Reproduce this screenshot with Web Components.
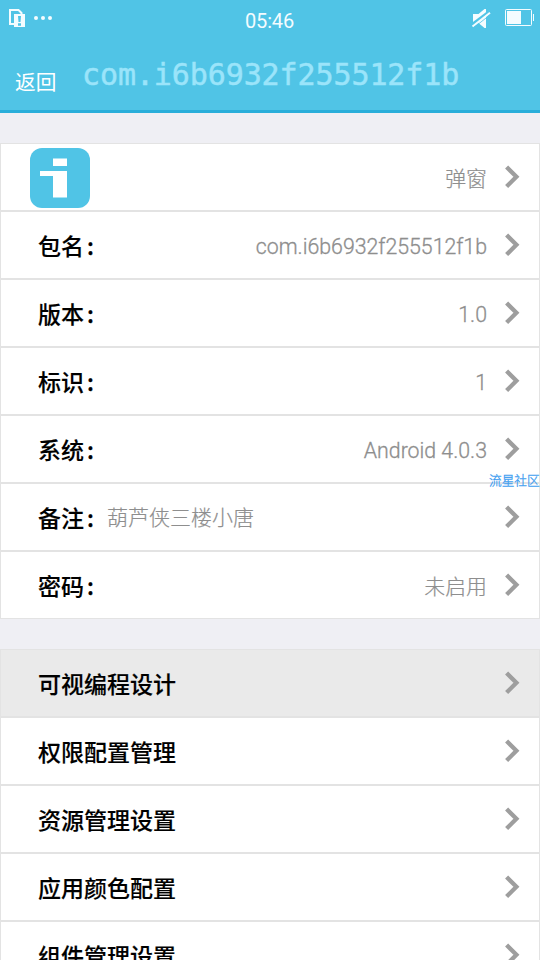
<!DOCTYPE html>
<html lang="zh-CN">
<head>
<meta charset="utf-8">
<title>com.i6b6932f255512f1b</title>
<style>
html,body{margin:0;height:960px;overflow:hidden;background:#efeff4;font-family:"Liberation Sans","Noto Sans CJK SC",sans-serif}
</style>
</head>
<body>
<app-screen></app-screen>
<script>
const define=(name,html,setup)=>customElements.define(name,class extends HTMLElement{
  connectedCallback(){
    if(this.shadowRoot)return;
    const t=document.createElement('template');t.innerHTML=html;
    this.attachShadow({mode:'open'}).append(t.content.cloneNode(true));
    if(setup)setup(this);
  }
});

define('status-bar',`<style>
:host{display:grid;grid-template-columns:1fr auto 1fr;height:40px;color:#f4fcff;align-items:start}
svg{display:block}
.time{font:20px/22px Roboto,sans-serif;padding-top:10px;margin-left:-1px;letter-spacing:-.15px}
.right{justify-self:end}
</style>
<svg width="60" height="36" viewBox="0 0 60 36"><path d="M14 24H10V10h8.500l3 3V14" fill="none" stroke="#f4fcff" stroke-width="2"/><path d="M14 14h11v13H14z" fill="#f4fcff"/><path d="M18 16h3l-.5 6h-2zM18 23.300h3v2.400h-3z" fill="#50c4e6"/><g fill="#f4fcff"><circle cx="36" cy="18" r="2"/><circle cx="43" cy="18" r="2"/><circle cx="50" cy="18" r="2"/></g></svg>
<span class="time">05:46</span>
<svg class="right" width="80" height="36" viewBox="460 0 80 36"><path d="M473 14h5.500l6-5h1.500v19h-1.500l-6-5H473z" fill="#f4fcff"/><path d="M471.500 25L489.500 11.500" stroke="#50c4e6" stroke-width="3"/><path d="M472.500 26.500L490 12.700" stroke="#f4fcff" stroke-width="2"/><path d="M472.500 26.500L490 12.700" stroke="#50c4e6" stroke-width=".8" transform="translate(1 1.400)"/><rect x="505.500" y="9.500" width="26" height="16" rx="1" fill="none" stroke="#f4fcff"/><path d="M507 11h14v13h-14zM533 14h1v7h-1z" fill="#f4fcff"/></svg>`);

define('nav-bar',`<style>
:host{display:flex;height:70px;padding-left:15px;border-bottom:3px solid #29aeda}
.back{width:67px;color:#fff;font:20.700px/30px "Noto Sans CJK SC",sans-serif;padding-top:26px;box-sizing:border-box}
.title{font:30px/40px "DejaVu Sans Mono",monospace;color:#9be4fa;-webkit-text-stroke:.5px #9be4fa;padding-top:15px;letter-spacing:-.1px}
</style><span class="back">返回</span><span class="title"><slot></slot></span>`);

define('chevron-icon',`<style>:host{display:block;width:15px;height:25px}svg{display:block}</style>
<svg width="16" height="24" viewBox="0 0 16 24"><path d="M2.600 2L12.400 11.800L2.600 21.600" fill="none" stroke="#9e9e9e" stroke-width="4.300"/></svg>`);

define('app-logo',`<style>:host{display:block;width:60px;height:60px;border-radius:12px;background:#50c4e6;margin-top:2px}svg{display:block}</style>
<svg width="60" height="60" viewBox="0 0 60 60"><path d="M23 10.500h14v7.500H23zM10 23h27v26.500H23V28H10z" fill="#fff"/></svg>`);

define('list-row',`<style>
:host{display:flex;box-sizing:border-box;height:68px;border:1px solid #e3e3e3;background:#fff;align-items:center;padding:0 20px 0 29px}
:host([active]){background:#eaeaea}
.label{font:500 23px/34px "Noto Sans CJK SC",sans-serif;color:#000;-webkit-text-stroke:.15px #000;margin-top:-1px;padding-left:8px}
.label:empty{display:none}
.colon{display:inline-block;width:11px;margin-left:3px;-webkit-text-stroke:.3px #000}
.note{font:21px/30px "Noto Sans CJK SC",sans-serif;font-weight:300;-webkit-text-stroke:.2px #8e8e8e;color:#8e8e8e;margin:-3px 0 0 9px}
.value{margin-left:auto;margin-right:17px;font:300 21.300px/30px Roboto,"Noto Sans CJK SC",sans-serif;-webkit-text-stroke:.3px #8e8e8e;color:#8e8e8e;padding-top:3px;white-space:pre}
.value.cjk{font:300 20.900px/30px "Noto Sans CJK SC",sans-serif;-webkit-text-stroke:.2px #8e8e8e;padding-top:0}
</style><slot name="icon"></slot><span class="label"></span><span class="note"></span><span class="value"></span><chevron-icon></chevron-icon>`,
el=>{
  for(const k of ['label','note','value']){
    const s=el.shadowRoot.querySelector('.'+k),v=el.getAttribute(k);
    if(v)s.textContent=v;
  }
  const label=el.shadowRoot.querySelector('.label');
  if(label.textContent.endsWith(':')){
    label.textContent=label.textContent.slice(0,-1);
    const colon=document.createElement('span');
    colon.className='colon';colon.textContent=':';
    label.append(colon);
  }
  const value=el.shadowRoot.querySelector('.value');
  if(/[\u4e00-\u9fff]/.test(value.textContent))value.classList.add('cjk');
});

define('list-group',`<style>:host{display:block;margin-top:30px}</style><slot></slot>`);
define('water-mark',`<style>:host{position:absolute;left:489px;top:471px;width:51px;overflow:hidden;white-space:nowrap;font:300 12.700px/17px "Noto Sans CJK SC",sans-serif;-webkit-text-stroke:.3px #3c9cf0;color:#3c9cf0}</style><slot></slot>`);

define('app-screen',`<style>:host{display:block;position:relative;width:540px;height:960px;overflow:hidden}header{background:#50c4e6}</style>
<header><status-bar></status-bar><nav-bar>com.i6b6932f255512f1b</nav-bar></header>
<list-group>
<list-row value="弹窗"><app-logo slot="icon"></app-logo></list-row>
<list-row label="包名:" value="com.i6b6932f255512f1b"></list-row>
<list-row label="版本:" value="1.0"></list-row>
<list-row label="标识:" value="1"></list-row>
<list-row label="系统:" value="Android 4.0.3"></list-row>
<list-row label="备注:" note="葫芦侠三楼小唐"></list-row>
<list-row label="密码:" value="未启用"></list-row>
</list-group>
<list-group>
<list-row label="可视编程设计" active></list-row>
<list-row label="权限配置管理"></list-row>
<list-row label="资源管理设置"></list-row>
<list-row label="应用颜色配置"></list-row>
<list-row label="组件管理设置"></list-row>
</list-group>
<water-mark>流星社区</water-mark>`);
</script>
</body>
</html>
